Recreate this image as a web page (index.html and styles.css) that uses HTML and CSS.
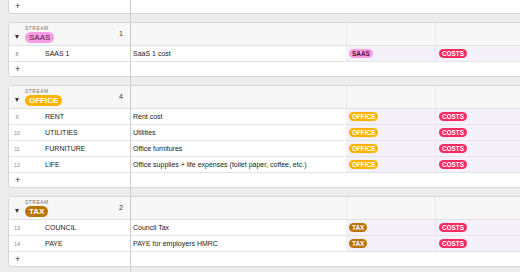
FILE: index.html
```html
<!DOCTYPE html>
<html lang="en">
<head>
  <meta charset="UTF-8" />
  <title>Streams</title>
  <link rel="stylesheet" href="styles.css">
</head>
<body>
  <div class="view">
    <div class="frozen-line"></div>

    <section class="group tail">
      <div class="row add">
        <div class="cell c1">+</div><div class="cell c2"></div><div class="cell c3"></div><div class="cell c4"></div>
      </div>
    </section>

    <section class="group">
      <div class="group-head">
        <div class="head-main">
          <span class="chevron"></span>
          <div class="head-label">
            <span class="field-name">STREAM</span>
            <span class="pill big saas">SAAS</span>
          </div>
          <span class="count">1</span>
        </div>
        <div class="head-cell"></div><div class="head-cell"></div><div class="head-cell"></div>
      </div>
      <div class="row">
        <div class="cell c1"><span class="num">8</span><span class="name">SAAS 1</span></div>
        <div class="cell c2">SaaS 1 cost</div>
        <div class="cell c3"><span class="pill saas">SAAS</span></div>
        <div class="cell c4"><span class="pill costs">COSTS</span></div>
      </div>
      <div class="row add">
        <div class="cell c1">+</div><div class="cell c2"></div><div class="cell c3"></div><div class="cell c4"></div>
      </div>
    </section>

    <section class="group">
      <div class="group-head">
        <div class="head-main">
          <span class="chevron"></span>
          <div class="head-label">
            <span class="field-name">STREAM</span>
            <span class="pill big office">OFFICE</span>
          </div>
          <span class="count">4</span>
        </div>
        <div class="head-cell"></div><div class="head-cell"></div><div class="head-cell"></div>
      </div>
      <div class="row">
        <div class="cell c1"><span class="num">9</span><span class="name">RENT</span></div>
        <div class="cell c2">Rent cost</div>
        <div class="cell c3"><span class="pill office">OFFICE</span></div>
        <div class="cell c4"><span class="pill costs">COSTS</span></div>
      </div>
      <div class="row">
        <div class="cell c1"><span class="num">10</span><span class="name">UTILITIES</span></div>
        <div class="cell c2">Utilities</div>
        <div class="cell c3"><span class="pill office">OFFICE</span></div>
        <div class="cell c4"><span class="pill costs">COSTS</span></div>
      </div>
      <div class="row">
        <div class="cell c1"><span class="num">11</span><span class="name">FURNITURE</span></div>
        <div class="cell c2">Office furnitures</div>
        <div class="cell c3"><span class="pill office">OFFICE</span></div>
        <div class="cell c4"><span class="pill costs">COSTS</span></div>
      </div>
      <div class="row">
        <div class="cell c1"><span class="num">12</span><span class="name">LIFE</span></div>
        <div class="cell c2">Office supplies + life expenses (toilet paper, coffee, etc.)</div>
        <div class="cell c3"><span class="pill office">OFFICE</span></div>
        <div class="cell c4"><span class="pill costs">COSTS</span></div>
      </div>
      <div class="row add">
        <div class="cell c1">+</div><div class="cell c2"></div><div class="cell c3"></div><div class="cell c4"></div>
      </div>
    </section>

    <section class="group">
      <div class="group-head">
        <div class="head-main">
          <span class="chevron"></span>
          <div class="head-label">
            <span class="field-name">STREAM</span>
            <span class="pill big tax">TAX</span>
          </div>
          <span class="count">2</span>
        </div>
        <div class="head-cell"></div><div class="head-cell"></div><div class="head-cell"></div>
      </div>
      <div class="row">
        <div class="cell c1"><span class="num">13</span><span class="name">COUNCIL</span></div>
        <div class="cell c2">Council Tax</div>
        <div class="cell c3"><span class="pill tax">TAX</span></div>
        <div class="cell c4"><span class="pill costs">COSTS</span></div>
      </div>
      <div class="row">
        <div class="cell c1"><span class="num">14</span><span class="name">PAYE</span></div>
        <div class="cell c2">PAYE for employers HMRC</div>
        <div class="cell c3"><span class="pill tax">TAX</span></div>
        <div class="cell c4"><span class="pill costs">COSTS</span></div>
      </div>
      <div class="row add">
        <div class="cell c1">+</div><div class="cell c2"></div><div class="cell c3"></div><div class="cell c4"></div>
      </div>
    </section>
  </div>
</body>
</html>
```

FILE: styles.css
```css
body {
  margin: 0;
  background: #ededed;
  font-family: 'Liberation Sans', Arial, sans-serif;
  color: #222;
  overflow: hidden;
}

.view {
  position: relative;
  height: 272px;
  overflow: hidden;
}

.frozen-line {
  position: absolute;
  left: 130px;
  top: 0;
  width: 1px;
  height: 100%;
  background: #cdcdcd;
  z-index: 2;
}

.group {
  width: 600px;
  margin: 0 0 8px 8px;
  background: #fff;
  border: 1px solid #d6d6d6;
  border-radius: 3px;
}

.group.tail {
  margin-top: -1px;
  border-top: none;
  border-radius: 0 0 3px 3px;
}

.group-head,
.row {
  display: grid;
  grid-template-columns: 121px 216px 89px 174px;
}

.group-head {
  height: 22px;
  background: #f7f7f8;
  border-bottom: 1px solid #e2e2e2;
}

.head-main {
  display: flex;
  align-items: center;
}

.chevron {
  width: 0;
  height: 0;
  margin: 6px 6px 0 6px;
  border-left: 2.5px solid transparent;
  border-right: 2.5px solid transparent;
  border-top: 4px solid #333;
}

.head-label {
  display: flex;
  flex-direction: column;
  align-items: flex-start;
  gap: 1px;
  flex: 1;
  padding-top: 1px;
}

.field-name {
  font-size: 4.8px;
  letter-spacing: 0.6px;
  color: #6f6f6f;
}

.count {
  font-size: 7px;
  color: #333;
  padding-right: 7px;
  padding-bottom: 2px;
}

.head-cell + .head-cell {
  border-left: 1px solid #e8e8ea;
}

.head-cell:first-of-type {
  margin-left: 1px;
}

.row {
  height: 15px;
  border-bottom: 1px solid #e4e4e4;
}

.row.add {
  height: 14px;
  border-bottom: none;
}

.cell {
  display: flex;
  align-items: center;
  font-size: 7px;
  white-space: nowrap;
  overflow: hidden;
}

.c2,
.c3,
.c4 {
  padding-left: 3px;
}

.row:not(.add) .c3,
.row:not(.add) .c4 {
  background: #f4f1fb;
}

.row:not(.add) .c4 {
  border-left: 1px solid #ebe6f4;
}

.num {
  width: 16px;
  text-align: center;
  font-size: 5.5px;
  color: #888;
}

.name {
  margin-left: 20px;
}

.add .c1 {
  padding-left: 6px;
  font-size: 9px;
  color: #333;
}

.pill {
  display: inline-block;
  font-size: 6.4px;
  font-weight: 700;
  line-height: 9px;
  height: 9px;
  padding: 0 3px;
  border-radius: 5px;
  color: #fff;
}

.pill.big {
  font-size: 8px;
  font-weight: 400;
  line-height: 11px;
  height: 11px;
  padding: 0 4px;
  border-radius: 6px;
}

.pill.big.office,
.pill.big.tax {
  font-weight: 700;
}

.saas {
  background: #f99de2;
  color: #4e1441;
}

.office {
  background: #fcb400;
}

.tax {
  background: #b87503;
}

.costs {
  background: #f82b60;
}
```
